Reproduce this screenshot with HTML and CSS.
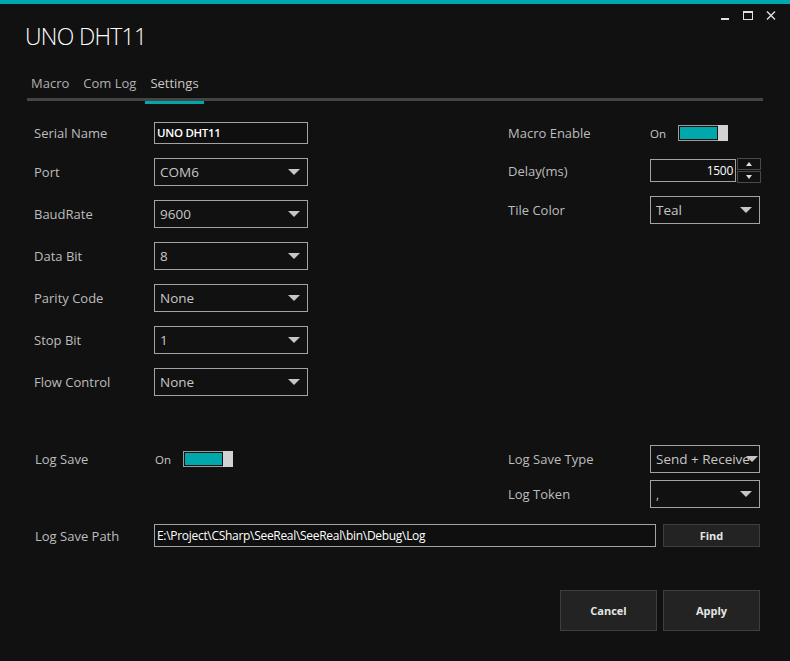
FILE: index.html
```html
<!DOCTYPE html>
<html>
<head>
<meta charset="utf-8">
<link rel="stylesheet" href="styles.css">
</head>
<body>
<div class="window">
  <div class="accent"></div>
  <div class="caption">
    <span class="cbtn"><svg width="12" height="12" viewBox="0 0 12 12"><rect x="2" y="8" width="8" height="2" fill="#e0e0e0"/></svg></span>
    <span class="cbtn"><svg width="12" height="12" viewBox="0 0 12 12"><rect x="1.5" y="1.5" width="9" height="8" fill="none" stroke="#e0e0e0" stroke-width="1"/><rect x="1" y="1" width="10" height="2" fill="#e0e0e0"/></svg></span>
    <span class="cbtn"><svg width="12" height="12" viewBox="0 0 12 12"><path d="M2 1.5 L10 9.5 M10 1.5 L2 9.5" stroke="#e0e0e0" stroke-width="1.4"/></svg></span>
  </div>
  <h1 class="title">UNO DHT11</h1>
  <div class="tabs">
    <span class="tab">Macro</span>
    <span class="tab">Com Log</span>
    <span class="tab active">Settings</span>
  </div>

  <div class="main">
    <div class="col left">
      <div class="row r1"><span class="label">Serial Name</span><div class="textbox bold">UNO DHT11</div></div>
      <div class="row"><span class="label">Port</span><div class="combo"><span>COM6</span><i class="arrow"></i></div></div>
      <div class="row"><span class="label">BaudRate</span><div class="combo"><span>9600</span><i class="arrow"></i></div></div>
      <div class="row"><span class="label">Data Bit</span><div class="combo"><span>8</span><i class="arrow"></i></div></div>
      <div class="row"><span class="label">Parity Code</span><div class="combo"><span>None</span><i class="arrow"></i></div></div>
      <div class="row"><span class="label">Stop Bit</span><div class="combo"><span>1</span><i class="arrow"></i></div></div>
      <div class="row"><span class="label">Flow Control</span><div class="combo"><span>None</span><i class="arrow"></i></div></div>
    </div>
    <div class="col right">
      <div class="row r1"><span class="label rlabel">Macro Enable</span><div class="switch"><span class="on">On</span><span class="track"><span class="fill"></span></span><span class="thumb"></span></div></div>
      <div class="row rdelay"><span class="label rlabel">Delay(ms)</span><div class="numeric"><div class="numbox">1500</div><div class="spin"><span class="sb"><i class="up"></i></span><span class="sb"><i class="down"></i></span></div></div></div>
      <div class="row rtile"><span class="label rlabel">Tile Color</span><div class="combo narrow"><span>Teal</span><i class="arrow"></i></div></div>
    </div>
  </div>

  <div class="logs">
    <div class="col left">
      <div class="row rlog"><span class="label">Log Save</span><div class="switch"><span class="on">On</span><span class="track"><span class="fill"></span></span><span class="thumb"></span></div></div>
    </div>
    <div class="col right">
      <div class="row rlog"><span class="label rlabel">Log Save Type</span><div class="combo narrow clip"><span>Send + Receive</span><i class="arrow"></i></div></div>
      <div class="row rtoken"><span class="label rlabel">Log Token</span><div class="combo narrow"><span class="small">,</span><i class="arrow"></i></div></div>
    </div>
  </div>

  <div class="pathrow">
    <span class="label">Log Save Path</span>
    <div class="textbox path">E:\Project\CSharp\SeeReal\SeeReal\bin\Debug\Log</div>
    <button class="btn find">Find</button>
  </div>

  <div class="actions">
    <button class="btn big">Cancel</button>
    <button class="btn big">Apply</button>
  </div>
</div>
</body>
</html>
```

FILE: styles.css
```css
* { box-sizing: border-box; }
html, body { margin: 0; padding: 0; }
body {
  background: #111111;
  width: 790px;
  height: 661px;
  overflow: hidden;
  font-family: "Open Sans", "Noto Sans", sans-serif;
  color: #c4c4c4;
}
.window { position: relative; width: 790px; height: 661px; }
.accent { height: 4px; background: #00a8ab; }
.caption {
  display: flex;
  justify-content: flex-end;
  gap: 11px;
  padding: 6px 13px 0 0;
  height: 20px;
}
.cbtn { width: 12px; height: 12px; display: flex; }
.title {
  margin: -5px 0 0 25px;
  font-size: 23px;
  font-weight: 300;
  letter-spacing: -0.7px;
  color: #ffffff;
  line-height: 34px;
  height: 34px;
}
.tabs {
  margin: 19px 27px 0 27px;
  display: flex;
  align-items: flex-start;
  border-bottom: 3px solid #454545;
  height: 29px;
}
.tab {
  font-size: 13px;
  color: #b0b0b0;
  padding: 0 4px;
  margin-right: 6px;
  line-height: 22px;
  height: 29px;
  position: relative;
}
.tab.active { color: #c8c8c8; }
.tab.active::after {
  content: "";
  position: absolute;
  left: -1px; width: 59px; bottom: -3px;
  height: 3px;
  background: #00a8ab;
}
.main { display: flex; margin-top: 21px; padding-left: 34px; }
.col { display: flex; flex-direction: column; }
.col.left { width: 474px; gap: 14px; }
.col.right { width: 252px; }
.row { display: flex; align-items: center; height: 28px; }
.row.r1 { height: 22px; }
.label { font-size: 13px; color: #bdbdbd; width: 120px; flex: none; }
.label.rlabel { width: 142px; }
.textbox {
  width: 154px;
  height: 22px;
  border: 1px solid #a3a3a3;
  background: #0f0f0f;
  color: #ffffff;
  font-size: 12px;
  line-height: 20px;
  padding-left: 2px;
  letter-spacing: -0.3px;
}
.textbox.bold { font-weight: 600; font-size: 11.5px; }
.combo {
  width: 154px;
  height: 28px;
  border: 1px solid #a3a3a3;
  display: flex;
  align-items: center;
  justify-content: space-between;
  padding: 0 7px 0 5px;
  font-size: 13.5px;
  color: #c6c6c6;
  overflow: hidden;
  white-space: nowrap;
}
.combo.narrow { width: 110px; }
.combo.clip span { overflow: hidden; width: 94px; flex: none; }
.combo.clip { padding-right: 1px; }
.combo.clip .arrow { margin-left: -6px; }
.combo .small { font-size: 12px; }
.arrow {
  flex: none;
  width: 0; height: 0;
  border-left: 6px solid transparent;
  border-right: 6px solid transparent;
  border-top: 6px solid #c6c6c6;
}
.switch { display: flex; align-items: center; height: 16px; }
.on { font-size: 11.5px; color: #c8c8c8; width: 28px; }
.track {
  width: 41px; height: 16px;
  border: 1px solid #9c9c9c;
  padding: 1px;
  display: flex;
}
.fill { flex: 1; background: #00a8ab; }
.thumb { width: 10px; height: 16px; background: #d2d2d2; margin-left: -1px; }
.rdelay { margin-top: 15px; height: 24px; }
.rtile { margin-top: 13px; }
.numeric { display: flex; height: 24px; }
.numbox {
  width: 86px; height: 23px;
  border: 1px solid #a3a3a3;
  color: #ffffff;
  font-size: 12px;
  text-align: right;
  padding-right: 2px;
  line-height: 21px;
  letter-spacing: -0.3px;
}
.spin { display: flex; flex-direction: column; width: 24px; margin-left: 1px; margin-top: -1px; }
.sb {
  height: 12px;
  border: 1px solid #4a4a4a;
  display: flex; align-items: center; justify-content: center;
}
.sb + .sb { margin-top: 1px; }
.up { width: 0; height: 0; border-left: 3px solid transparent; border-right: 3px solid transparent; border-bottom: 4px solid #e0e0e0; }
.down { width: 0; height: 0; border-left: 3px solid transparent; border-right: 3px solid transparent; border-top: 4px solid #e0e0e0; }
.logs { display: flex; margin-top: 49px; padding-left: 34px; }
.logs .col.left { padding-left: 1px; }
.rlog { height: 28px; }
.rtoken { margin-top: 7px; }
.pathrow { display: flex; align-items: center; margin-top: 16px; padding-left: 35px; height: 23px; }
.pathrow .label { width: 119px; }
.textbox.path { width: 502px; height: 23px; line-height: 21px; }
.btn {
  font-family: "Open Sans", "Noto Sans", sans-serif;
  background: #232323;
  border: 1px solid #3e3e3e;
  color: #e6e6e6;
  font-weight: 700;
  font-size: 11px;
  padding: 0;
}
.find { width: 97px; height: 23px; margin-left: 7px; }
.actions { display: flex; justify-content: flex-end; gap: 6px; padding-right: 30px; margin-top: 43px; }
.big { width: 97px; height: 41px; }
```
